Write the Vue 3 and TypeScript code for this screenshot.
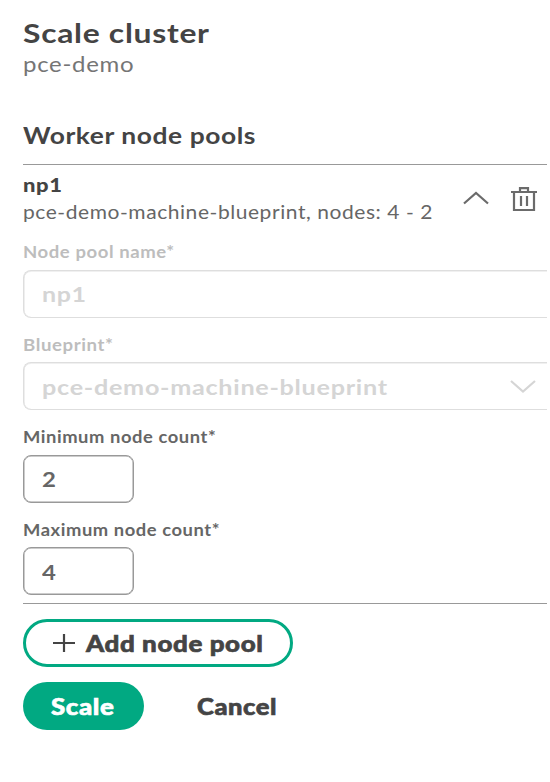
<script setup lang="ts">
import { ref } from 'vue'

const open = ref(true)
const pool = ref({ name: 'np1', blueprint: 'pce-demo-machine-blueprint', min: 2, max: 4 })
</script>

<template>
  <main class="panel">
    <header class="head">
      <h1><span class="t t-title">Scale cluster</span></h1>
      <p class="sub"><span class="t t-sub">pce-demo</span></p>
    </header>

    <h2><span class="t t-section">Worker node pools</span></h2>

    <section class="pool">
      <div class="summary">
        <div class="info">
          <h3><span class="t t-name">{{ pool.name }}</span></h3>
          <p class="desc"><span class="t t-desc">{{ pool.blueprint }}, nodes: {{ pool.max }} - {{ pool.min }}</span></p>
        </div>
        <button class="icon up" aria-label="Collapse" @click="open = !open">
          <svg width="28" height="16" viewBox="0 0 28 16"><path d="M2 13.5 14 3l12 10.5" /></svg>
        </button>
        <button class="icon" aria-label="Remove">
          <svg width="28" height="26" viewBox="0 0 28 26">
            <path d="M1 6h26M4 6V24h20V6M10 6V2.2h8v3.8M11 10v10M17 10v10" />
          </svg>
        </button>
      </div>

      <div v-if="open" class="fields">
        <div class="field off">
          <label><span class="t t-label">Node pool name*</span></label>
          <div class="box wide"><span class="t t-short">{{ pool.name }}</span></div>
        </div>
        <div class="field off">
          <label><span class="t t-label t-bp">Blueprint*</span></label>
          <div class="box wide">
            <span class="t t-value">{{ pool.blueprint }}</span>
            <svg width="28" height="16" viewBox="0 0 28 16"><path d="M2 3l12 10.5L26 3" /></svg>
          </div>
        </div>
        <div class="field">
          <label><span class="t t-label t-min">Minimum node count*</span></label>
          <div class="box"><span class="t t-digit">{{ pool.min }}</span></div>
        </div>
        <div class="field">
          <label><span class="t t-label t-min">Maximum node count*</span></label>
          <div class="box"><span class="t t-digit">{{ pool.max }}</span></div>
        </div>
      </div>
    </section>

    <button class="add">
      <svg width="24" height="20" viewBox="0 0 24 20"><path d="M1 10h22M12 1v18" /></svg>
      <span class="t t-add">Add node pool</span>
    </button>
    <footer class="actions">
      <button class="primary"><span class="t t-scale">Scale</span></button>
      <button class="plain"><span class="t t-cancel">Cancel</span></button>
    </footer>
  </main>
</template>

<style>
body {
  background: #fff;
}
</style>

<style scoped>
.panel {
  box-sizing: border-box;
  width: 547px;
  height: 782px;
  padding: 16px 0 0 22.6px;
  overflow: hidden;
  color: #444;
  font-family: Lato, "Liberation Sans", sans-serif;
}
h1, h2, h3, p {
  margin: 0;
  font-weight: 700;
}
button {
  margin: 0;
  padding: 0;
  border: 0;
  background: none;
  color: inherit;
  font: inherit;
}
svg {
  display: block;
  flex: none;
  fill: none;
  stroke: currentColor;
  stroke-width: 2.2;
}
.t {
  display: inline-block;
  white-space: nowrap;
  letter-spacing: 0.5px;
  transform-origin: 0 50%;
}
.t-title { transform: scaleX(1.18); letter-spacing: 0.6px; }
.t-sub { transform: scaleX(1.143); letter-spacing: 0.6px; }
.t-section { transform: scaleX(1.147); }
.t-name { transform: scaleX(1.22); }
.t-desc { transform: scaleX(1.134); }
.t-label { transform: scaleX(1.138); }
.t-bp { transform: scaleX(1.145); }
.t-min { transform: scaleX(1.128); }
.t-short { transform: scaleX(1.19); }
.t-value { transform: scaleX(1.199); letter-spacing: 0.6px; }
.t-digit { transform: scaleX(1.14); }
.t-add { transform: scaleX(1.18); }
.t-scale { transform: scaleX(1.175); }
.t-cancel { transform: scaleX(1.16); }
.add .t, .actions .t {
  -webkit-text-stroke: 0.6px currentColor;
}
h1 {
  font-size: 27px;
  line-height: 33px;
}
.sub {
  padding-top: 1px;
  font-size: 21px;
  font-weight: 400;
  line-height: 28px;
  color: #757575;
}
h2 {
  padding: 42px 0 14px;
  font-size: 23px;
  line-height: 30px;
}
.pool {
  box-sizing: border-box;
  height: 440px;
  border-top: 1px solid #999;
  border-bottom: 1px solid #999;
}
.summary {
  display: flex;
  height: 76px;
}
.info {
  width: 438.6px;
  padding-top: 7px;
}
h3 {
  font-size: 18px;
  font-weight: 900;
  line-height: 26px;
}
.desc {
  font-size: 18.5px;
  font-weight: 400;
  line-height: 29px;
  color: #666;
}
.icon {
  display: flex;
  align-self: flex-start;
  margin-top: 21px;
  color: #6b6b6b;
}
.up {
  margin: 25px 20px 0 1px;
}
.field {
  height: 92.5px;
  color: #666;
}
.off {
  color: #bdbdbd;
}
label {
  display: block;
  height: 28.5px;
  font-size: 16.3px;
  font-weight: 700;
  line-height: 22px;
}
.off label {
  line-height: 21px;
}
.box {
  display: flex;
  align-items: center;
  justify-content: space-between;
  box-sizing: border-box;
  width: 111px;
  height: 48px;
  padding: 0 10px 0 18px;
  border: 1px solid #999;
  border-radius: 8px;
  box-shadow: inset 0 0 0 0.5px #999;
  font-size: 21px;
  font-weight: 700;
}
.wide {
  width: auto;
  border-color: #dedede;
  border-right: 0;
  border-radius: 8px 0 0 8px;
  box-shadow: inset 0.5px 0 0 #dedede, inset 0 1px 0 #f0f0f0;
  color: #d5d5d5;
}
.add {
  display: flex;
  align-items: center;
  gap: 10px;
  box-sizing: border-box;
  width: 270px;
  height: 48px;
  margin-top: 15px;
  padding-left: 26.4px;
  border: 3px solid #01a982;
  border-radius: 24px;
  font-size: 22px;
  font-weight: 900;
}
.actions {
  display: flex;
  gap: 53.7px;
  margin-top: 15px;
  font-size: 22px;
  font-weight: 900;
}
.primary {
  width: 121px;
  height: 48px;
  padding-left: 28px;
  border-radius: 24px;
  background: #01a982;
  color: #fff;
  text-align: left;
}
</style>
